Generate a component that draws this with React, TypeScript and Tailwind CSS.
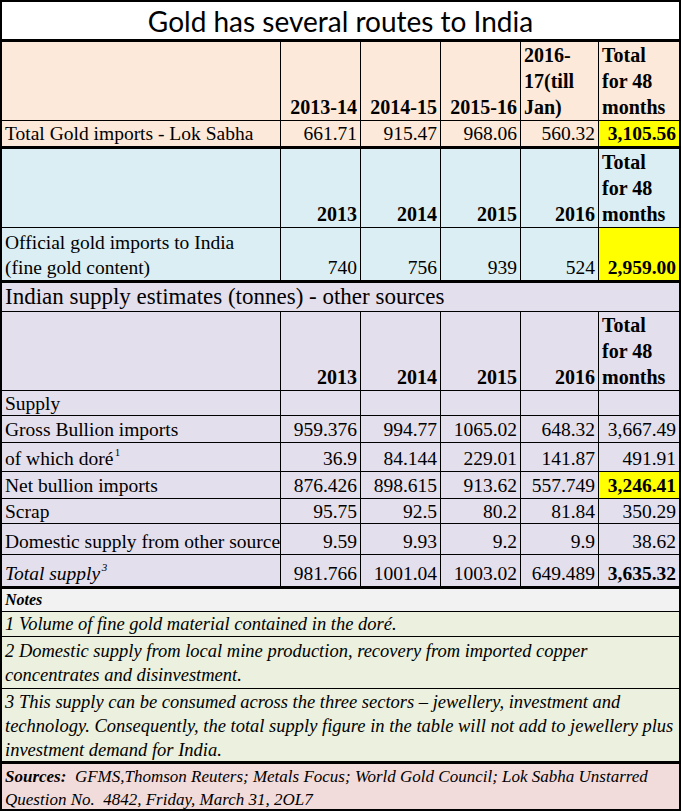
import type { ReactNode } from "react";

const GRID = "grid grid-cols-[279px_80px_80px_80px_78px_80px]";

type Cell = { text: ReactNode; bold?: boolean; yellow?: boolean; left?: boolean };

const Row = ({
  label,
  cells,
  h,
  last,
}: {
  label: ReactNode;
  cells: Cell[];
  h: string;
  last?: boolean;
}) => (
  <div className={`${GRID} ${h} ${last ? "" : "border-b border-black"}`}>
    <div className="border-r border-black pl-[3px] flex items-end leading-[25px] whitespace-nowrap">
      {label}
    </div>
    {cells.map((c, i) => (
      <div
        key={i}
        className={`flex items-end px-[3px] leading-[25px] whitespace-nowrap ${
          c.left ? "justify-start" : "justify-end"
        } ${i < cells.length - 1 ? "border-r border-black" : ""} ${
          c.bold ? "font-bold" : ""
        } ${c.yellow ? "bg-[#ffff00]" : ""}`}
      >
        {c.text}
      </div>
    ))}
  </div>
);

const total48 = (
  <span className="leading-[26px] text-left text-[20px]">
    Total
    <br />
    for 48
    <br />
    months
  </span>
);

const yearHeader = (years: string[], fifth: ReactNode, h: string) => (
  <Row
    h={h}
    label=""
    cells={[
      ...years.map((y) => ({ text: <span className="text-[20px]">{y}</span>, bold: true })),
      { text: <span className="text-[20px]">{fifth}</span>, bold: true },
      { text: total48, bold: true, left: true },
    ]}
  />
);

const num = (vals: string[], lastBold?: boolean, lastYellow?: boolean): Cell[] =>
  vals.map((v, i) =>
    i === vals.length - 1 ? { text: v, bold: lastBold, yellow: lastYellow } : { text: v }
  );

// footnote mark, kept out of the line box so the label stays on the row baseline
const WithSup = ({ text, n, italic }: { text: string; n: string; italic?: boolean }) => (
  <span className={`relative block ${italic ? "italic" : ""}`}>
    {text}
    <span className="absolute -right-[7px] top-[1px] text-[11px] leading-none">{n}</span>
  </span>
);

export default function App() {
  return (
    <div className="w-[681px] h-[811px] bg-white">
      <div className="w-[681px] h-[811px] border-2 border-black text-[19.5px] text-black flex flex-col overflow-hidden font-['Liberation_Serif',serif]">
        <div className="h-[40px] flex items-center justify-center text-[28px] border-b-[3px] border-black bg-white font-['Lato',sans-serif]">
          Gold has several routes to India
        </div>

        <div className="bg-[#fde9d9] border-b-[3px] border-black">
          <Row
            h="h-[79px]"
            label=""
            cells={[
              { text: <span className="text-[20px]">2013-14</span>, bold: true },
              { text: <span className="text-[20px]">2014-15</span>, bold: true },
              { text: <span className="text-[20px]">2015-16</span>, bold: true },
              {
                text: (
                  <span className="leading-[26px] text-[20px]">
                    2016-
                    <br />
                    17(till
                    <br />
                    Jan)
                  </span>
                ),
                bold: true,
                left: true,
              },
              { text: total48, bold: true, left: true },
            ]}
          />
          <Row
            h="h-[25px]"
            last
            label="Total Gold imports - Lok Sabha"
            cells={num(["661.71", "915.47", "968.06", "560.32", "3,105.56"], true, true)}
          />
        </div>

        <div className="bg-[#daeef3] border-b-[3px] border-black">
          {yearHeader(["2013", "2014", "2015"], "2016", "h-[79px]")}
          <Row
            h="h-[52px]"
            last
            label={
              <span>
                Official gold imports to India
                <br />
                (fine gold content)
              </span>
            }
            cells={num(["740", "756", "939", "524", "2,959.00"], true, true)}
          />
        </div>

        <div className="bg-[#e4dfec] border-b-[3px] border-black">
          <div className="h-[29px] border-b border-black pl-[3px] flex items-center text-[23px]">
            Indian supply estimates (tonnes) - other sources
          </div>
          {yearHeader(["2013", "2014", "2015"], "2016", "h-[79px]")}
          <Row h="h-[25px]" label="Supply" cells={num(["", "", "", "", ""])} />
          <Row
            h="h-[27px]"
            label="Gross Bullion imports"
            cells={num(["959.376", "994.77", "1065.02", "648.32", "3,667.49"])}
          />
          <Row
            h="h-[29px]"
            label={<WithSup text="of which doré" n="1" />}
            cells={num(["36.9", "84.144", "229.01", "141.87", "491.91"])}
          />
          <Row
            h="h-[27px]"
            label="Net bullion imports"
            cells={num(["876.426", "898.615", "913.62", "557.749", "3,246.41"], true, true)}
          />
          <Row
            h="h-[25px]"
            label="Scrap"
            cells={num(["95.75", "92.5", "80.2", "81.84", "350.29"])}
          />
          <Row
            h="h-[31px]"
            label="Domestic supply from other source"
            cells={num(["9.59", "9.93", "9.2", "9.9", "38.62"])}
          />
          <Row
            h="h-[31px]"
            last
            label={<WithSup text="Total supply" n="3" italic />}
            cells={num(["981.766", "1001.04", "1003.02", "649.489", "3,635.32"], true)}
          />
        </div>

        <div className="italic text-[18.5px] leading-[24px]">
          <div className="h-[23px] bg-[#f2f2f2] border-b border-black pl-[3px] font-bold text-[16px] flex items-center">
            Notes
          </div>
          <div className="h-[25px] bg-[#ebf1de] border-b border-black pl-[3px] flex items-center">
            1 Volume of fine gold material contained in the doré.
          </div>
          <div className="h-[52px] bg-[#ebf1de] border-b border-black pl-[3px] py-[2px]">
            2 Domestic supply from local mine production, recovery from imported copper
            <br />
            concentrates and disinvestment.
          </div>
          <div className="h-[75px] bg-[#ebf1de] border-b-[3px] border-black pl-[3px] py-[1px]">
            3 This supply can be consumed across the three sectors – jewellery, investment and
            <br />
            technology. Consequently, the total supply figure in the table will not add to jewellery
            plus
            <br />
            investment demand for India.
          </div>
        </div>
        <div className="flex-1 bg-[#f2dcdb] italic text-[17px] leading-[23px] pl-[3px] pt-[1px] whitespace-nowrap">
          <span className="font-bold">Sources:</span>&nbsp; GFMS,Thomson Reuters; Metals Focus; World
          Gold Council; Lok Sabha Unstarred
          <br />
          Question No.&nbsp; 4842, Friday, March 31, 2OL7
        </div>
      </div>
    </div>
  );
}
